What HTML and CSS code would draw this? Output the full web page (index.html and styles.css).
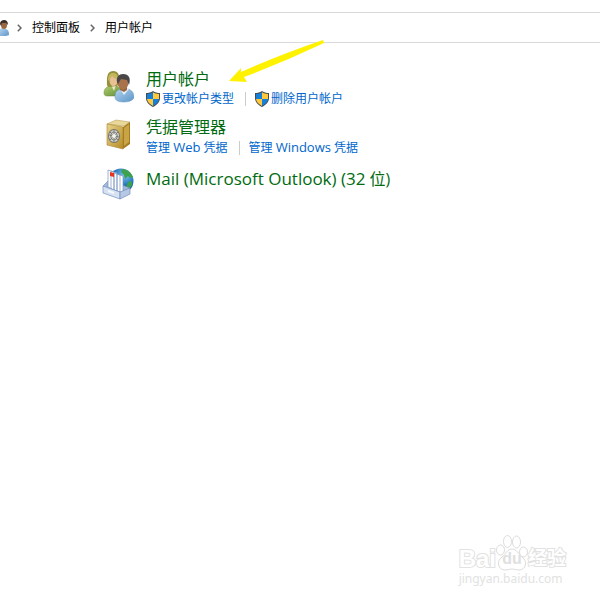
FILE: index.html
```html
<!DOCTYPE html>
<html lang="zh-CN">
<head>
<meta charset="utf-8">
<meta name="viewport" content="width=device-width, initial-scale=1">
<title>用户帐户</title>
<link rel="stylesheet" href="styles.css">
</head>
<body>
<svg class="defs" aria-hidden="true">
  <defs>
    <linearGradient id="gold" x1="0" y1="0" x2="1" y2="1"><stop offset="0" stop-color="#e9d48d"/><stop offset="1" stop-color="#b58b25"/></linearGradient>
    <linearGradient id="shirt" x1="0" y1="0" x2="1" y2="1"><stop offset="0" stop-color="#b4d3ed"/><stop offset="1" stop-color="#5b95c9"/></linearGradient>
    <linearGradient id="green" x1="0" y1="0" x2="1" y2="1"><stop offset="0" stop-color="#b3cf70"/><stop offset="1" stop-color="#5f8d36"/></linearGradient>
    <radialGradient id="globe" cx=".65" cy=".25" r=".8"><stop offset="0" stop-color="#82c9ed"/><stop offset=".5" stop-color="#2677c0"/><stop offset="1" stop-color="#103f87"/></radialGradient>
    <symbol id="shield" viewBox="0 0 14 16">
      <path fill="#454b50" d="M7 0C5 1.500 2.500 2 0 2v5c0 4 3 7 7 9 4-2 7-5 7-9V2C11.500 2 9 1.500 7 0z"/>
      <path fill="#1680d8" d="M7 1.300C5.300 2.400 3.200 3 1 3v5h6zM7 8h6c-.4 3.200-2.700 5.200-6 7z"/>
      <path fill="#ffc83d" d="M7 1.300C8.700 2.400 10.800 3 13 3v5H7zM7 8H1c.4 3.200 2.700 5.200 6 7z"/>
    </symbol>
  </defs>
</svg>

<nav class="address" aria-label="路径">
  <svg class="address-icon" viewBox="0 0 9 16" aria-hidden="true">
    <path fill="url(#shirt)" d="M0 9l2-1 4 1c2 1 3 2 3 6l-3 1H0z"/>
    <ellipse cx="4" cy="5" rx="3" ry="4" fill="#9b673f"/>
    <path fill="#3b302a" d="M0 4c0-3 2-4 4-4s4 1 4 5L6 3 2 3 1 6z"/>
  </svg>
  <svg class="chevron" viewBox="0 0 5 8" aria-hidden="true"><path d="M.8.8L4 4 .8 7.200"/></svg>
  <a href="#">控制面板</a>
  <svg class="chevron" viewBox="0 0 5 8" aria-hidden="true"><path d="M.8.8L4 4 .8 7.200"/></svg>
  <a href="#">用户帐户</a>
</nav>

<main class="categories">
  <section class="category">
    <svg class="icon" viewBox="0 0 32 32" aria-hidden="true">
      <path fill="url(#green)" stroke="#6e8b45" stroke-width=".5" d="M2 22c0-4 2-6 6-7h7l4 3v7H5c-2 0-3-1-3-3z"/>
      <path fill="#eee5c9" d="M9 14h5l-2 6z"/>
      <path fill="#93903a" d="M5 14C5 9 4 0 11 0c6 0 7 5 6 13l-2 2-9 1z"/>
      <ellipse cx="11.500" cy="9.500" rx="4" ry="5.500" fill="#e9bf94"/>
      <path fill="#c5b75e" d="M6 10c0-6 2-8 5-8 3 0 5 2 5 6-3 0-5-2-6-3-1 2-2 3-4 5z"/>
      <path fill="url(#shirt)" stroke="#6796bd" stroke-width=".5" d="M13 26c0-5 2-7 6-8h7c4 1 6 4 6 9-2 3-6 4-10 4-5 0-9-1-9-5z"/>
      <path fill="#e8f1f8" d="M18 18l4 6 5-6-2-2h-5z"/>
      <path fill="#99653e" d="M18 15h7v4l-3 2-4-2z"/>
      <ellipse cx="21" cy="12" rx="5.500" ry="6.500" fill="#a8724a"/>
      <path fill="#484646" d="M15 11c-1-5 2-8 6-8 6 0 8 4 6 11l-2-5-6-1-3 5z"/>
    </svg>
    <div class="body">
      <h2><a href="#">用户帐户</a></h2>
      <div class="tasks">
        <a class="guarded" href="#"><svg class="shield" aria-hidden="true"><use href="#shield"/></svg>更改帐户类型</a>
        <a class="guarded" href="#"><svg class="shield" aria-hidden="true"><use href="#shield"/></svg>删除用户帐户</a>
      </div>
    </div>
  </section>

  <section class="category">
    <svg class="icon" viewBox="0 0 32 32" aria-hidden="true">
      <path fill="#e9d897" stroke="#b3934a" stroke-width=".5" d="M5 5l9-4 14 2-6 4z"/>
      <path fill="url(#gold)" stroke="#a7832c" stroke-width=".6" d="M5 5l16 3v22L5 26z"/>
      <path fill="#a77c1e" d="M21 8l7-5v22l-7 5z"/>
      <path fill="#c9a447" d="M22 9l5-4v18l-5 4z"/>
      <ellipse cx="12" cy="17" rx="6" ry="7" fill="#74736d"/>
      <ellipse cx="12" cy="17" rx="5" ry="6" fill="#d9dad5"/>
      <ellipse cx="12" cy="17" rx="3.200" ry="4" fill="none" stroke="#85857e" stroke-width="1.200"/>
      <path stroke="#77786f" stroke-width=".9" d="M12 11v12M7 16l10 2M8 13l8 8M8 21l8-8"/>
      <circle cx="12" cy="17" r="2" fill="#f2f2ed"/>
    </svg>
    <div class="body">
      <h2><a href="#">凭据管理器</a></h2>
      <div class="tasks">
        <a href="#">管理 <span class="latin">Web</span> 凭据</a>
        <a href="#">管理 <span class="latin">Windows</span> 凭据</a>
      </div>
    </div>
  </section>

  <section class="category single">
    <svg class="icon" viewBox="0 0 32 32" aria-hidden="true">
      <circle cx="19" cy="13" r="12.500" fill="url(#globe)"/>
      <path fill="#3da150" d="M20 1c5 0 9 3 11 8l-3 1-2-2-3 3-1-4-3-3zM26 14l4-1v4l-4 6-2-4z"/>
      <path fill="#a1b9da" stroke="#6685b4" stroke-width=".6" d="M1 18l6-6 21 8-9 7z"/>
      <path fill="#fff" stroke="#7794c0" stroke-width=".7" d="M15 6l6 2v17l-6-2zM12 5l6 2v17l-6-2zM9 3l6 2v18l-6-2zM6 2l6 2v18l-6-3z"/>
      <path fill="#e8341f" d="M8 4l4 1v4l-4-1z"/>
      <path fill="#d6e2f2" stroke="#7590bd" stroke-width=".7" d="M1 18l17 6v7L1 25z"/>
      <path fill="#b5c9e5" stroke="#647fae" stroke-width=".6" d="M18 24l10-4v6l-10 5z"/>
      <path fill="#f7faff" d="M6 22l6 2v2l-6-2z"/>
    </svg>
    <div class="body">
      <h2><a href="#"><span class="latin">Mail (Microsoft Outlook) (32</span> 位)</a></h2>
    </div>
  </section>
</main>

<svg class="arrow" viewBox="0 0 96 44" aria-hidden="true"><path fill="#fff200" d="M94 0Q50 15 12 32V28L0 41l18 1-3-5Q55 22 95 3z"/></svg>

<div class="watermark">
  <div class="brand">
    <span>Bai</span>
    <span class="paw">
      <svg viewBox="0 0 32 36" aria-hidden="true"><ellipse cx="4.500" cy="15" rx="4" ry="5"/><ellipse cx="11.500" cy="6.500" rx="4" ry="6"/><ellipse cx="20.500" cy="7" rx="4" ry="6"/><ellipse cx="27.500" cy="17" rx="4" ry="5"/><path d="M16 14c-5 0-6 5-10 8-6 4-4 13 3 13 3 0 5-1 7-1s4 1 7 1c7 0 9-9 3-13-4-3-5-8-10-8z"/></svg>
      <span class="du">du</span>
    </span>
    <span class="cn">经验</span>
  </div>
  <div class="site">jingyan.baidu.com</div>
</div>
</body>
</html>
```
FILE: styles.css
```css
* {
  box-sizing: border-box;
}

body {
  margin: 0;
  padding-top: 12px;
  min-height: 100vh;
  position: relative;
  background: #fff;
  color: #000;
  font: 12px/16px "Open Sans", "Noto Sans CJK SC", sans-serif;
}

a {
  color: inherit;
  text-decoration: none;
}

a:hover {
  text-decoration: underline;
}

.defs {
  position: absolute;
  width: 0;
  height: 0;
}

.address {
  display: flex;
  align-items: center;
  height: 31px;
  border: solid #d9d9d9;
  border-width: 1px 0;
}

.address-icon {
  width: 9px;
  height: 16px;
}

.chevron {
  width: 5px;
  height: 8px;
  margin: 0 10px;
  fill: none;
  stroke: #666;
  stroke-width: 1.5;
}

.address-icon + .chevron {
  margin: 0 10px 0 8px;
}

.categories {
  display: flex;
  flex-direction: column;
  gap: 9px;
  padding: 26px 20px 0 102px;
}

.category {
  display: flex;
  gap: 12px;
}

.icon {
  flex: none;
  width: 32px;
  height: 32px;
  margin-top: 2px;
}

h2 {
  margin: 0 0 1px;
  color: #006b10;
  font-size: 16px;
  font-weight: 400;
  line-height: 20px;
}

h2 .latin {
  font-size: 17px;
}

.single h2 {
  line-height: 25px;
}

.tasks {
  display: flex;
  color: #0066cc;
  line-height: 18px;
}

.tasks .latin {
  font-size: 13px;
}

.tasks a + a {
  margin-left: 11px;
  padding-left: 10px;
  background: linear-gradient(#ccc, #ccc) left center / 1px 14px no-repeat;
}

.guarded {
  display: flex;
  align-items: center;
  gap: 2px;
}

.shield {
  width: 14px;
  height: 16px;
}

.arrow {
  position: absolute;
  top: 40px;
  left: 229px;
  width: 96px;
  height: 44px;
}

.watermark {
  position: absolute;
  right: 34px;
  bottom: 13px;
  color: #fff;
  font-family: "Liberation Sans", "Noto Sans CJK SC", sans-serif;
  -webkit-text-stroke: 2px #e2e2e2;
  paint-order: stroke fill;
}

.brand {
  display: flex;
  align-items: flex-end;
  font-size: 24px;
  font-weight: 700;
  line-height: 24px;
}

.paw {
  display: grid;
  width: 32px;
  height: 36px;
}

.paw > * {
  grid-area: 1 / 1;
}

.paw svg {
  width: 32px;
  height: 36px;
  fill: #fff;
  stroke: #dcdcdc;
  paint-order: normal;
}

.du {
  place-self: end center;
  color: #e0e0e0;
  font-size: 16px;
  -webkit-text-stroke: 0;
}

.cn {
  font-size: 19px;
}

.site {
  color: #e2e2e2;
  font: 12px/16px "Noto Sans", sans-serif;
  -webkit-text-stroke: 0;
}
```
